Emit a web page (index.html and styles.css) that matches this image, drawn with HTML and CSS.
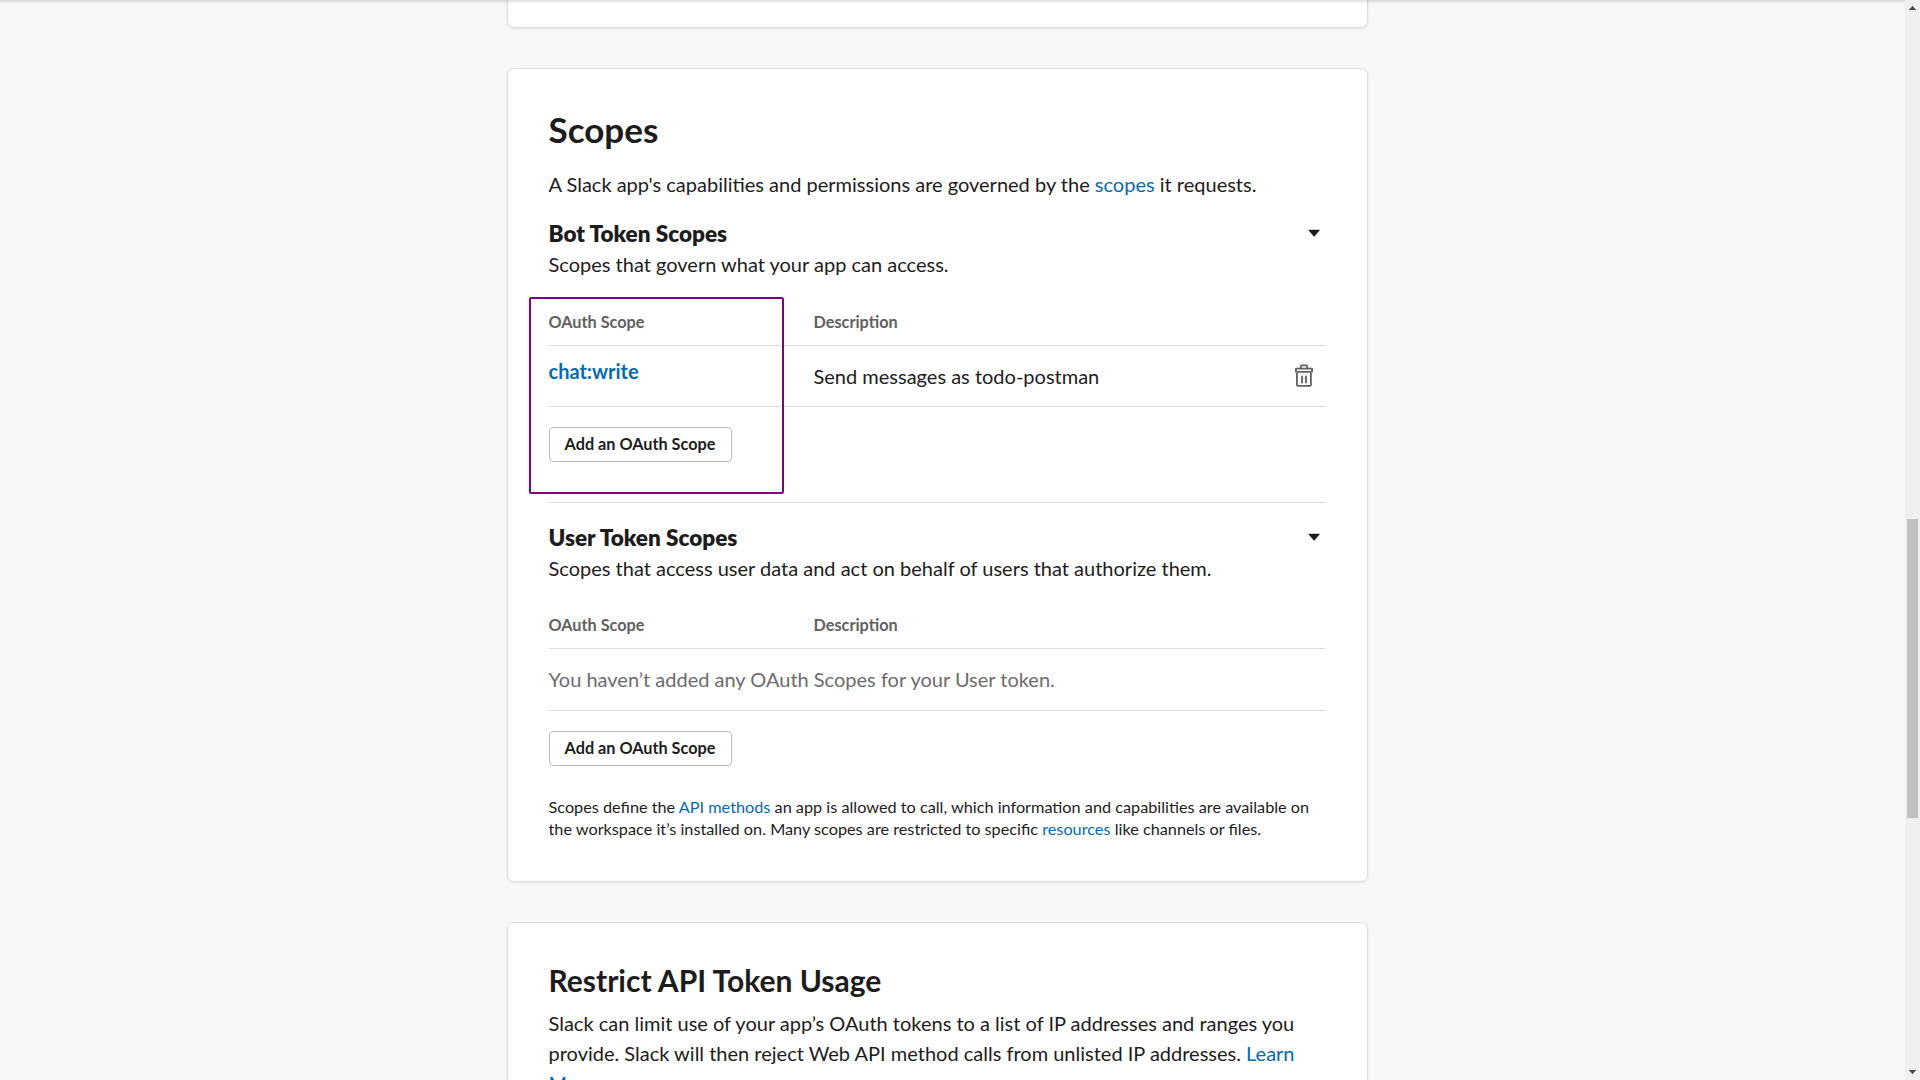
FILE: index.html
```html
<!DOCTYPE html>
<html lang="en">
<head>
<meta charset="utf-8">
<title>OAuth &amp; Permissions</title>
<link rel="stylesheet" href="styles.css">
</head>
<body>
<div class="viewport">
  <main class="page">
    <section class="card card-previous"></section>

    <section class="card card-scopes">
      <h1 class="title">Scopes</h1>
      <p class="intro">A Slack app's capabilities and permissions are governed by the <a href="#">scopes</a> it requests.</p>

      <section class="group">
        <div class="group-head"><h2>Bot Token Scopes</h2><svg class="caret" viewBox="0 0 12 8"><path d="M.9.8h10.4q.6 0 .2.6L6.6 7.2q-.5.5-1 0L.7 1.4Q.3.8.9.8z"/></svg></div>
        <p class="group-desc">Scopes that govern what your app can access.</p>
        <div class="row row-head"><span class="col-scope">OAuth Scope</span><span>Description</span></div>
        <div class="row row-scope">
          <a class="col-scope scope-name" href="#">chat:write</a>
          <span class="scope-desc">Send messages as todo-postman</span>
          <svg class="trash" viewBox="0 0 20 24"><path d="M2.9 9v11.8q0 1.1 1.1 1.1h11.8q1.1 0 1.1-1.1V9M2.4 4.6h15.2q.5 0 .5.5v2.3q0 .5-.5.5H2.4q-.5 0-.5-.5V5.1q0-.5.5-.5zM6.8 4.4V2.5q0-1.2 1.2-1.2h4q1.2 0 1.2 1.2v1.9M8 11.7v7.5M12 11.7v7.5"/></svg>
        </div>
        <button class="button">Add an OAuth Scope</button>
      </section>

      <section class="group group-user">
        <div class="group-head"><h2>User Token Scopes</h2><svg class="caret" viewBox="0 0 12 8"><path d="M.9.8h10.4q.6 0 .2.6L6.6 7.2q-.5.5-1 0L.7 1.4Q.3.8.9.8z"/></svg></div>
        <p class="group-desc">Scopes that access user data and act on behalf of users that authorize them.</p>
        <div class="row row-head"><span class="col-scope">OAuth Scope</span><span>Description</span></div>
        <div class="row row-empty">You haven’t added any OAuth Scopes for your User token.</div>
        <button class="button">Add an OAuth Scope</button>
      </section>

      <p class="footnote">Scopes define the <a href="#">API methods</a> an app is allowed to call, which information and capabilities are available on the workspace it’s installed on. Many scopes are restricted to specific <a href="#">resources</a> like channels or files.</p>
      <div class="highlight"></div>
    </section>

    <section class="card card-restrict">
      <h2 class="subtitle">Restrict API Token Usage</h2>
      <p class="restrict-text">Slack can limit use of your app’s OAuth tokens to a list of IP addresses and ranges you provide. Slack will then reject Web API method calls from unlisted IP addresses. <a href="#">Learn More.</a></p>
    </section>
  </main>
  <div class="scrollbar">
    <svg class="arrow" viewBox="0 0 7 4" shape-rendering="crispEdges"><path d="M3 0h1v1h1v1h1v1h1v1H0V3h1V2h1V1h1z"/></svg>
    <div class="thumb"></div>
    <svg class="arrow" viewBox="0 0 7 4" shape-rendering="crispEdges"><path d="M0 0h7v1H6v1H5v1H4v1H3V3H2V2H1V1H0z"/></svg>
  </div>
</div>
</body>
</html>
```
FILE: styles.css
```css
* { box-sizing: border-box; }
html, body { margin: 0; height: 100%; overflow: hidden; }
body { background: #f8f8f8; color: #1d1c1d; font: 20px/30px Lato, sans-serif; }
h1, h2, p { margin: 0; }
a { color: #066bac; text-decoration: none; }

.viewport { display: flex; height: 1080px; overflow: hidden; }
.page {
  position: relative;
  flex: 1;
  display: flex;
  flex-direction: column;
  align-items: center;
  gap: 40px;
  padding-right: 30px;
}
/* shadow cast by the fixed header above the scrolled page */
.page::before {
  content: "";
  position: absolute;
  inset: 0 0 auto;
  height: 4px;
  z-index: 1;
  background: linear-gradient(rgba(0, 0, 0, .13), rgba(0, 0, 0, 0));
}
.card {
  position: relative;
  flex: none;
  width: 861px;
  padding: 41px 41px 41px 40.5px;
  background: #fff;
  border: 1px solid #ddd;
  border-radius: 7px;
  box-shadow: 0 1px 3px rgba(0, 0, 0, .08);
}
.card-previous { height: 48px; margin-top: -20px; padding: 0; }

.card-scopes { padding-top: 40px; }
.title { font-size: 35px; line-height: 40px; font-weight: 700; }
.intro { margin-top: 20px; }
.group { margin-top: 19px; }
.group-head { display: flex; align-items: center; justify-content: space-between; height: 30px; }
.group-head h2 { padding-top: 2px; font-size: 22.5px; line-height: 30px; font-weight: 800; }
.caret { width: 12px; height: 8px; margin-right: 6px; fill: #1d1c1d; }
.group-desc { margin-top: 1px; }
.row { display: flex; border-bottom: 1px solid #ddd; }
.col-scope { width: 265px; flex: none; }
.row-head { margin-top: 31px; padding-bottom: 11px; font-size: 16.25px; line-height: 24px; font-weight: 700; color: #616061; }
.row-scope { height: 61px; padding-top: 10px; }
.scope-name { font-weight: 700; }
.scope-desc { padding-top: 5px; flex: 1; }
.trash { width: 20px; height: 24px; margin: 7.5px 12px 0 0; fill: none; stroke: #616061; stroke-width: 1.8; }
.button {
  display: block;
  height: 35px;
  width: 183px;
  margin-top: 20px;
  padding: 0 0 2px;
  border: 1px solid #bbb;
  border-radius: 4px;
  background: #fff;
  color: #1d1c1d;
  font: 700 16.25px/31px Lato, sans-serif;
}
.group-user { margin-top: 40px; padding-top: 19px; border-top: 1px solid #ddd; }
.group-user .row-head { margin-top: 30px; }
.row-empty { height: 62px; padding-top: 15px; color: #6c6b6d; }
.footnote { margin-top: 30px; font-size: 16.25px; line-height: 22px; }
.highlight {
  position: absolute;
  left: 21px;
  top: 228px;
  width: 255px;
  height: 197px;
  border: 2px solid #800080;
  border-radius: 2px;
}

.subtitle { font-size: 30px; line-height: 32px; font-weight: 700; }
.restrict-text { margin-top: 12px; }

.scrollbar {
  flex: none;
  width: 15px;
  display: flex;
  flex-direction: column;
  align-items: center;
  padding: 6px 0;
  background: #f0f0f0;
}
.arrow { width: 7px; height: 4px; fill: #505050; }
.thumb { width: 11px; height: 299px; margin: 509px 0 auto; background: #c1c1c1; }
```
